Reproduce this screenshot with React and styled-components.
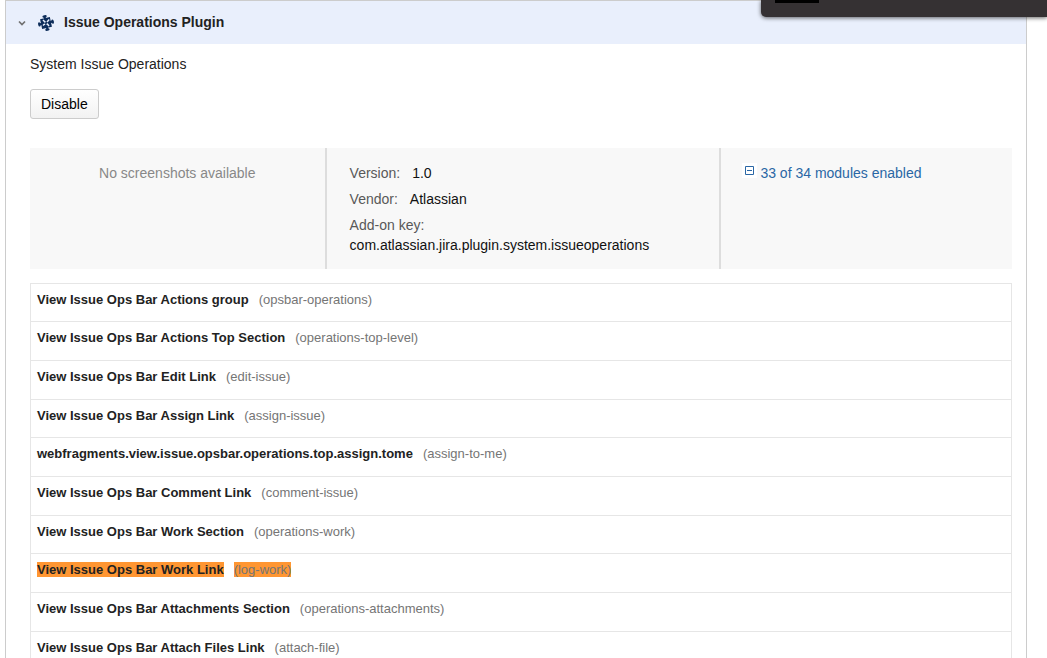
import React from "react";
import styled, { createGlobalStyle } from "styled-components";

const GlobalStyle = createGlobalStyle`
  * { box-sizing: border-box; }
  html, body { margin: 0; background: #fff; }
  body {
    height: 100vh;
    overflow: hidden;
    color: #222;
    font-family: "Liberation Sans", Arial, sans-serif;
    font-size: 14px;
    line-height: 20px;
  }
`;

const Plugin = styled.section`
  margin: 0 20px 0 5px;
  border: 1px solid #ccc;
`;

const PluginHeader = styled.header`
  background: #e9effc;
`;

const HeaderToggle = styled.button`
  display: flex;
  align-items: center;
  width: 100%;
  height: 43px;
  padding: 0 12px;
  border: 0;
  background: none;
  color: #222;
  font: inherit;
  font-weight: bold;
  text-align: left;
`;

const Chevron = styled.svg`
  width: 8px;
  height: 8px;
  margin-right: 12px;
`;

const PluginLogo = styled.svg`
  width: 16px;
  height: 16px;
  margin-right: 10px;
`;

const Title = styled.span`
  padding-bottom: 2px;
`;

const Details = styled.div`
  padding: 10px 14px 20px 24px;
`;

const Description = styled.p`
  margin: 0 0 15px;
`;

const ActionButton = styled.button`
  display: block;
  height: 30px;
  padding: 0 10px;
  border: 1px solid #ccc;
  border-radius: 3px;
  background: linear-gradient(#fff, #f2f2f2);
  color: #000;
  font: inherit;
`;

const Info = styled.div`
  display: flex;
  margin-top: 29px;
  background: #f8f8f8;
`;

const InfoColumn = styled.div`
  box-sizing: content-box;
  flex: ${({ $grow }) => ($grow ? "1 1 0" : "none")};
  width: ${({ $width }) => $width || "auto"};
  border-left: ${({ $divided }) => ($divided ? "2px solid #ddd" : "0")};
`;

const NoScreenshots = styled.p`
  margin: 15px 0 0;
  color: #888;
  text-align: center;
`;

const Facts = styled.dl`
  margin: 0;
  padding: 15px 23px 14px;
`;

const Fact = styled.div`
  display: flex;
  flex-wrap: wrap;
  column-gap: 12px;
  margin-bottom: ${({ $last }) => ($last ? "0" : "6px")};
  flex-direction: ${({ $stacked }) => ($stacked ? "column" : "row")};

  dt { color: #595959; }
  dd { margin: 0; color: #111; overflow-wrap: anywhere; }
`;

const ModulesLink = styled.a`
  display: inline-flex;
  align-items: flex-start;
  gap: 3px;
  margin: 15px 0 0 21px;
  color: #2a67a5;
  text-decoration: none;
`;

const Collapse = styled.svg`
  width: 15px;
  height: 15px;
`;

const Modules = styled.ul`
  margin: 14px 0 0;
  padding: 0;
  border: 1px solid #e6e6e6;
  list-style: none;
`;

const Module = styled.li`
  display: flex;
  align-items: flex-start;
  gap: 10px;
  height: 39px;
  padding: 8px 6px 0;
  border-bottom: 1px solid #e6e6e6;
  font-size: 13px;
  line-height: 15px;

  &:nth-child(3n + 1) { height: 38px; }
`;

const ModuleName = styled.strong`
  background: ${({ $marked }) => ($marked ? "#ff9632" : "none")};
`;

const ModuleKey = styled.span`
  background: ${({ $marked }) => ($marked ? "#ff9632" : "none")};
  color: #757575;
`;

const Overlay = styled.aside`
  position: fixed;
  top: 0;
  right: 0;
  width: 286px;
  height: 17px;
  padding-left: 14px;
  border-radius: 0 0 0 5px;
  background: #353133;
  box-shadow: 0 1px 4px rgba(0, 0, 0, 0.6);
`;

const OverlayThumb = styled.div`
  width: 44px;
  height: 3px;
  background: #000;
`;

const modules = [
  ["View Issue Ops Bar Actions group", "opsbar-operations"],
  ["View Issue Ops Bar Actions Top Section", "operations-top-level"],
  ["View Issue Ops Bar Edit Link", "edit-issue"],
  ["View Issue Ops Bar Assign Link", "assign-issue"],
  ["webfragments.view.issue.opsbar.operations.top.assign.tome", "assign-to-me"],
  ["View Issue Ops Bar Comment Link", "comment-issue"],
  ["View Issue Ops Bar Work Section", "operations-work"],
  ["View Issue Ops Bar Work Link", "log-work"],
  ["View Issue Ops Bar Attachments Section", "operations-attachments"],
  ["View Issue Ops Bar Attach Files Link", "attach-file"],
];

const found = "log-work";

export default function App() {
  return (
    <>
      <GlobalStyle />
      <Plugin>
        <PluginHeader>
          <HeaderToggle type="button" aria-expanded="true">
            <Chevron viewBox="0 0 8 8" aria-hidden="true">
              <path d="M1 2.5l3 3 3-3" fill="none" stroke="#707070" strokeWidth="1.7" />
            </Chevron>
            <PluginLogo viewBox="0 0 16 16" aria-hidden="true">
              <g transform="rotate(-12 8 8)" fill="#0d2d5a">
                <path d="M3 3h10v10H3z" />
                <path d="M7 1h2v3H7zM12 7h3v2h-3zM7 12h2v3H7zM1 7h3v2H1z" />
                <ellipse cx="8" cy="1.2" rx="2.2" ry="1.2" />
                <ellipse cx="14.8" cy="8" rx="1.2" ry="2.2" />
                <ellipse cx="8" cy="14.8" rx="2.2" ry="1.2" />
                <ellipse cx="1.2" cy="8" rx="1.2" ry="2.2" />
              </g>
              <path
                d="M5 5l2 2M11.2 4.6L9 7M11 11L9.2 8.8M5 10.5L6.6 9"
                fill="none"
                stroke="#e9effc"
                strokeWidth="1.5"
              />
              <path d="M6.2 6.2h1.4v1.4H6.2zM8.6 8.6H10V10H8.6zM6 8.8h1.2V10H6z" fill="#e9effc" />
            </PluginLogo>
            <Title>Issue Operations Plugin</Title>
          </HeaderToggle>
        </PluginHeader>
        <Details>
          <Description>System Issue Operations</Description>
          <ActionButton type="button">Disable</ActionButton>
          <Info>
            <InfoColumn $width="30%">
              <NoScreenshots>No screenshots available</NoScreenshots>
            </InfoColumn>
            <InfoColumn $width="40%" $divided>
              <Facts>
                <Fact><dt>Version:</dt><dd>1.0</dd></Fact>
                <Fact><dt>Vendor:</dt><dd>Atlassian</dd></Fact>
                <Fact $stacked $last>
                  <dt>Add-on key:</dt>
                  <dd>com.atlassian.jira.plugin.system.issueoperations</dd>
                </Fact>
              </Facts>
            </InfoColumn>
            <InfoColumn $grow $divided>
              <ModulesLink href="#modules">
                <Collapse viewBox="0 0 15 15" aria-hidden="true">
                  <path d="M0 0h15v15H0z" fill="#fff" />
                  <path d="M3.5 3.5h8v8h-8zM5 7.5h5" fill="none" stroke="#2a67a5" />
                </Collapse>
                33 of 34 modules enabled
              </ModulesLink>
            </InfoColumn>
          </Info>
          <Modules id="modules">
            {modules.map(([name, key]) => (
              <Module key={key}>
                <ModuleName $marked={key === found}>{name}</ModuleName>
                <ModuleKey $marked={key === found}>({key})</ModuleKey>
              </Module>
            ))}
          </Modules>
        </Details>
      </Plugin>
      <Overlay aria-hidden="true">
        <OverlayThumb />
      </Overlay>
    </>
  );
}
